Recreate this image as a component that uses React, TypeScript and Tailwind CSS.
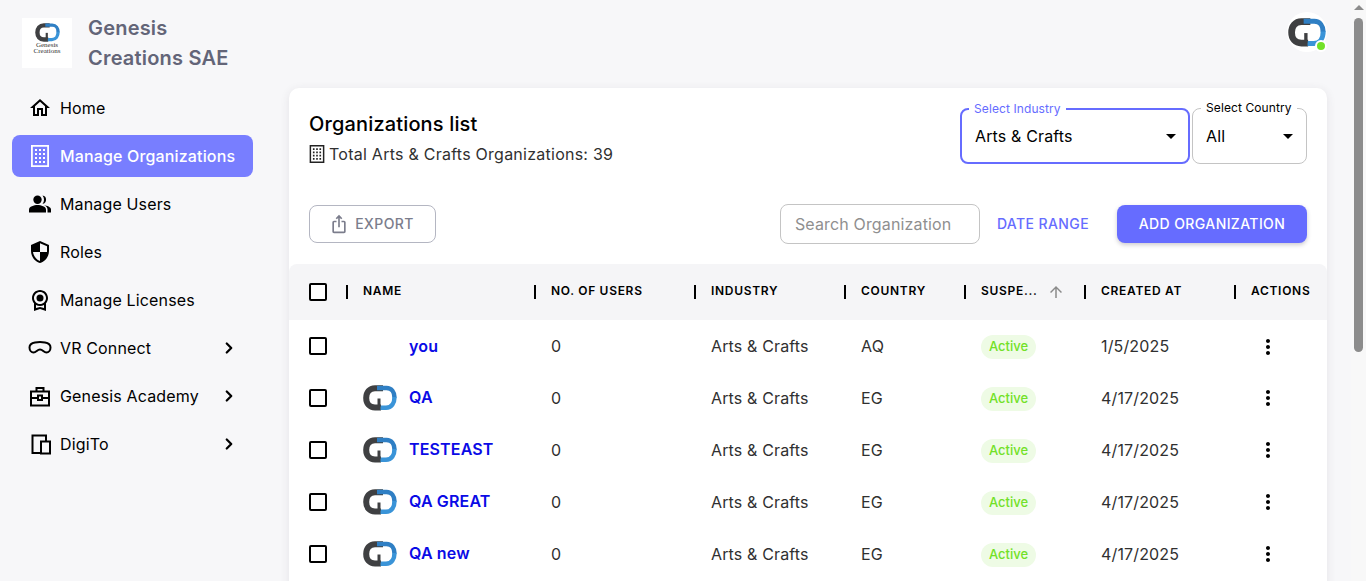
import { ChevronRight } from "lucide-react";
import type { ReactNode } from "react";

type IconProps = { d: string; className?: string };

const MuiIcon = ({ d, className = "h-6 w-6" }: IconProps) => (
  <svg viewBox="0 0 24 24" className={className} fill="currentColor">
    <path d={d} />
  </svg>
);

const Logo = ({ className }: { className?: string }) => (
  <svg viewBox="0 0 34 26" className={className} fill="none">
    <path d="M20 3.200H12C6.500 3.200 3.200 7.500 3.200 13s3.300 9.500 8.800 9.500h6" stroke="#3f4042" strokeWidth="6" />
    <path d="M14 3h9.500c5.200 0 8 4.300 8 9.500" stroke="#2f7fc4" strokeWidth="4.500" />
    <path d="M31.500 12c0 6-3 10.800-8.500 10.800h-5.500" stroke="#3a94d8" strokeWidth="4.500" />
    <path d="M16 22v-8.500" stroke="#3f4042" strokeWidth="3" />
  </svg>
);

const BuildingIcon = ({ className }: { className?: string }) => (
  <svg viewBox="0 0 18 22" className={className} fill="currentColor">
    <path fillRule="evenodd" d="M0 0h18v22H0zM1.800 1.800v18.400h14.400V1.800z" />
    <path d="M4 4h2v2H4zm4 0h2v2H8zm4 0h2v2h-2zM4 8h2v2H4zm4 0h2v2H8zm4 0h2v2h-2zM4 12h2v2H4zm4 0h2v2H8zm4 0h2v2h-2zM4 16h2v2H4zm4 0h2v2H8zm4 0h2v2h-2z" />
  </svg>
);

const icons = {
  home: <MuiIcon d="m12 5.690 5 4.500V18h-2v-6H9v6H7v-7.810zM12 3 2 12h3v8h6v-6h2v6h6v-8h3z" />,
  building: <BuildingIcon className="h-[22px] w-[18px]" />,
  users: (
    <svg viewBox="0 0 22 18" className="h-[18px] w-[22px]" fill="currentColor">
      <circle cx="8.500" cy="4.700" r="4.200" />
      <path d="M0 17.500v-3C0 11.500 5 10 8.500 10s8.500 1.500 8.500 4.500v3z" />
      <path d="M13.500.5a4.200 4.200 0 0 1 0 8.300 6 6 0 0 0 1.500-4.150A6 6 0 0 0 13.500.5z" />
      <path d="M15 10.300c3 .4 7 1.800 7 4.200v3h-3.500v-3c0-1.700-1-3.200-3.500-4.200z" />
    </svg>
  ),
  roles: (
    <svg viewBox="0 0 24 24" className="h-6 w-6 -scale-x-100" fill="currentColor">
      <path d="M12 1 3 5v6c0 5.550 3.840 10.740 9 12 5.160-1.260 9-6.450 9-12V5zm0 10.990h7c-.530 4.120-3.280 7.790-7 8.940V12H5V6.300l7-3.110z" />
    </svg>
  ),
  license: (
    <svg viewBox="0 0 24 24" className="h-6 w-6" fill="currentColor">
      <path d="M20 10c0-4.420-3.580-8-8-8s-8 3.580-8 8c0 2.030.760 3.870 2 5.280V23l6-2 6 2v-7.720c1.240-1.410 2-3.250 2-5.280m-8-6c3.310 0 6 2.690 6 6s-2.690 6-6 6-6-2.690-6-6 2.690-6 6-6m0 15-4 1.020v-3.100c1.180.680 2.540 1.080 4 1.080s2.820-.400 4-1.080v3.100z" />
      <circle cx="12" cy="10" r="3.500" />
    </svg>
  ),
  vr: (
    <svg viewBox="0 0 24 24" className="h-6 w-6" fill="none" stroke="currentColor" strokeWidth="2">
      <path d="M7 6.500c3-.5 7-.5 10 0 3 .5 5.500 2 5.500 5 0 3-2 5-4 5-3 0-3.500-3-6.500-3s-3.500 3-6.500 3c-2 0-4-2-4-5s2.500-4.500 5.500-5z" />
    </svg>
  ),
  academy: (
    <svg viewBox="0 0 24 24" className="h-6 w-6" fill="none" stroke="currentColor" strokeWidth="2">
      <path d="M3 7.500h18v14H3zM8.500 7.500V4h7v3.500M3 14h7M14 14h7M10 11.500h4v4.500h-4z" />
    </svg>
  ),
  digito: (
    <svg viewBox="0 0 24 24" className="h-6 w-6" fill="none" stroke="currentColor" strokeWidth="2">
      <path d="M13 21H4.500V3.500H18V9" />
      <path d="M13 9.500h9v12h-9z" />
    </svg>
  ),
};

const nav: { label: string; icon: ReactNode; active?: boolean; more?: boolean }[] = [
  { label: "Home", icon: icons.home },
  { label: "Manage Organizations", icon: icons.building, active: true },
  { label: "Manage Users", icon: icons.users },
  { label: "Roles", icon: icons.roles },
  { label: "Manage Licenses", icon: icons.license },
  { label: "VR Connect", icon: icons.vr, more: true },
  { label: "Genesis Academy", icon: icons.academy, more: true },
  { label: "DigiTo", icon: icons.digito, more: true },
];

const columns = [
  { label: "NAME" },
  { label: "NO. OF USERS" },
  { label: "INDUSTRY" },
  { label: "COUNTRY" },
  { label: "SUSPE...", sort: true },
  { label: "CREATED AT" },
  { label: "ACTIONS" },
];

const rows = [
  { name: "you", country: "AQ", created: "1/5/2025", logo: false },
  { name: "QA", country: "EG", created: "4/17/2025", logo: true },
  { name: "TESTEAST", country: "EG", created: "4/17/2025", logo: true },
  { name: "QA GREAT", country: "EG", created: "4/17/2025", logo: true },
  { name: "QA new", country: "EG", created: "4/17/2025", logo: true },
];

const gridCols = "grid grid-cols-[57px_188px_160px_150px_120px_120px_150px_1fr]";

const SelectBox = ({
  label,
  value,
  focused,
  className,
}: {
  label: string;
  value: string;
  focused?: boolean;
  className: string;
}) => (
  <div
    className={`relative flex h-14 items-center justify-between rounded-lg bg-white text-base tracking-[0.15px] text-black ${
      focused ? "border-2 border-[#666cff] pl-[13px] pr-[12px]" : "border border-[#c4c4c4] pl-[13px] pr-[13px]"
    } ${className}`}
  >
    <span
      className={`absolute top-[-9px] bg-white px-[5px] text-xs leading-4 tracking-[0.1px] ${
        focused ? "left-[7px] text-[#666cff]" : "left-[8px] text-black"
      }`}
    >
      {label}
    </span>
    <span>{value}</span>
    <span className="h-0 w-0 border-x-[5px] border-t-[5px] border-x-transparent border-t-black" />
  </div>
);

const Checkbox = () => <span className="block h-[18px] w-[18px] rounded-[2px] border-2 border-black bg-white" />;

export default function App() {
  return (
    <div className="flex h-[581px] w-full overflow-hidden bg-[#f7f7f9] font-['Inter','Noto_Sans',sans-serif] text-black">
      <aside className="w-[289px] shrink-0 pl-3 pr-[36px]">
        <div className="flex h-[87px] items-start gap-4 pl-[10px] pt-[18px]">
          <div className="flex h-[50px] w-[50px] shrink-0 flex-col items-center bg-white pt-[5px]">
            <Logo className="h-[19px] w-[25px]" />
            <span className="font-['Liberation_Serif',serif] text-[7px] leading-[6px] text-[#333]">Genesis</span>
            <span className="font-['Liberation_Serif',serif] text-[7px] leading-[6px] text-[#333]">Creations</span>
          </div>
          <div className="mt-[-5px] text-xl font-semibold leading-[30px] tracking-[0.2px] text-[#636578]">
            Genesis
            <br />
            Creations SAE
          </div>
        </div>
        <nav className="flex flex-col gap-[6px]">
          {nav.map((item) => (
            <div
              key={item.label}
              className={`flex h-[42px] items-center rounded-lg pl-[16px] pr-3 ${
                item.active ? "bg-[#787eff] font-medium text-white" : "text-black"
              }`}
            >
              <span className="flex w-6 shrink-0 justify-center">{item.icon}</span>
              <span className="ml-2 flex-1 text-base tracking-[0.15px]">{item.label}</span>
              {item.more && <ChevronRight className="mr-[3px] h-[18px] w-[18px] stroke-[3]" />}
            </div>
          ))}
        </nav>
      </aside>

      <main className="min-w-0 flex-1 pr-[24px]">
        <div className="flex h-[88px] items-start justify-end pr-0 pt-3">
          <div className="relative flex h-10 w-10 items-center justify-center rounded-full bg-white">
            <Logo className="h-[29px] w-[38px]" />
            <span className="absolute bottom-[0px] right-[0px] h-[12px] w-[12px] rounded-full border-2 border-white bg-[#72e128]" />
          </div>
        </div>

        <section className="h-[520px] rounded-t-[10px] bg-white shadow-[0_2px_10px_rgba(58,53,65,0.1)]">
          <div className="flex h-[117px] items-start justify-between px-5 pt-5">
            <div>
              <h1 className="text-xl font-medium leading-8 tracking-[0.15px]">Organizations list</h1>
              <p className="mt-[2px] flex items-center text-base leading-6 tracking-[0.25px] text-[#303030]">
                <BuildingIcon className="mr-[4px] h-[18px] w-[16px] text-[#222]" />
                Total Arts &amp; Crafts Organizations: 39
              </p>
            </div>
            <div className="flex gap-[2px]">
              <SelectBox label="Select Industry" value="Arts & Crafts" focused className="w-[230px]" />
              <SelectBox label="Select Country" value="All" className="w-[115px]" />
            </div>
          </div>

          <div className="flex h-[59px] items-start justify-between px-5">
            <button
              type="button"
              className="flex h-[38px] w-[127px] items-center justify-center gap-[6px] rounded-lg border border-[#b4b6c2] pr-[2px] text-sm font-medium tracking-[0.4px] text-[#7b7d8c]"
            >
              <svg viewBox="0 0 24 24" className="h-5 w-5" fill="currentColor">
                <path d="M16 5l-1.420 1.420-1.590-1.590V16h-1.980V4.830L9.420 6.420 8 5l4-4 4 4zm4 5v11c0 1.100-.900 2-2 2H6c-1.110 0-2-.890-2-2V10c0-1.110.890-2 2-2h3v2H6v11h12V10h-3V8h3c1.100 0 2 .890 2 2z" />
              </svg>
              EXPORT
            </button>
            <div className="flex items-start">
              <div className="-mt-px flex h-10 w-[200px] items-center rounded-lg border border-[#c4c4c4] px-[14px] pb-[1px] text-base tracking-[0.15px] text-[#8f8f8f]">
                Search Organization
              </div>
              <span className="ml-[17px] mr-[28px] mt-[9px] text-sm font-medium tracking-[0.4px] text-[#666cff]">DATE RANGE</span>
              <button
                type="button"
                className="h-[38px] w-[190px] rounded-lg bg-[#666cff] text-sm font-medium tracking-[0.4px] text-white shadow-[0_2px_4px_rgba(58,53,65,0.25)]"
              >
                ADD ORGANIZATION
              </button>
            </div>
          </div>

          <div className={`${gridCols} h-14 items-center rounded-t-lg bg-[#f5f5f7]`}>
            <div className="pl-5">
              <Checkbox />
            </div>
            {columns.map((col) => (
              <div key={col.label} className="flex items-center gap-[15px] text-xs font-semibold tracking-[0.7px]">
                <span className="h-[14px] w-[2px] shrink-0 bg-black" />
                <span className="mb-[2px]">{col.label}</span>
                {col.sort && (
                  <svg viewBox="0 0 24 24" className="ml-[-6px] h-[18px] w-[18px] text-[#8a8a8a]" fill="currentColor">
                    <path d="m4 12 1.410 1.410L11 7.830V20h2V7.830l5.580 5.590L20 12l-8-8z" />
                  </svg>
                )}
              </div>
            ))}
          </div>

          {rows.map((row, index) => (
            <div key={row.name} className={`${gridCols} h-[52px] items-center text-base tracking-[0.15px] text-[#303030]`}>
              <div className="pl-5">
                <Checkbox />
              </div>
              <div className="flex items-center pl-[17px]">
                <span className="flex w-[34px] justify-center">
                  {row.logo && <Logo className="h-[26px] w-[34px]" />}
                </span>
                <span className={`ml-3 font-semibold text-[#0a0ae6] ${row.logo ? "mb-[2px]" : ""}`}>{row.name}</span>
              </div>
              <div className="pl-[17px]">0</div>
              <div className="pl-[17px]">Arts &amp; Crafts</div>
              <div className="pl-[17px]">{row.country}</div>
              <div className="pl-[17px]">
                <span className="inline-flex h-6 w-[55px] items-center justify-center rounded-full bg-[#eefbe5] text-[13px] font-medium tracking-normal text-[#72e128]">
                  Active
                </span>
              </div>
              <div className="pl-[17px]">{row.created}</div>
              <div className={`flex pl-[22px] ${index === 0 ? "mt-[2px]" : ""}`}>
                <svg viewBox="0 0 24 24" className="h-6 w-6 text-black" fill="currentColor">
                  <path d="M12 8c1.100 0 2-.900 2-2s-.900-2-2-2-2 .900-2 2 .900 2 2 2m0 2c-1.100 0-2 .900-2 2s.900 2 2 2 2-.900 2-2-.900-2-2-2m0 6c-1.100 0-2 .900-2 2s.900 2 2 2 2-.900 2-2-.900-2-2-2" />
                </svg>
              </div>
            </div>
          ))}
        </section>
      </main>

      <div className="relative w-[15px] shrink-0 bg-[#f8f8f8]">
        <span className="mx-auto mt-[5px] block h-0 w-0 border-x-[5px] border-b-[5px] border-x-transparent border-b-[#8c8c8c]" />
        <span className="absolute left-[3px] top-[18px] h-[334px] w-[9px] rounded-[5px] bg-[#8c8c8c]" />
      </div>
    </div>
  );
}
